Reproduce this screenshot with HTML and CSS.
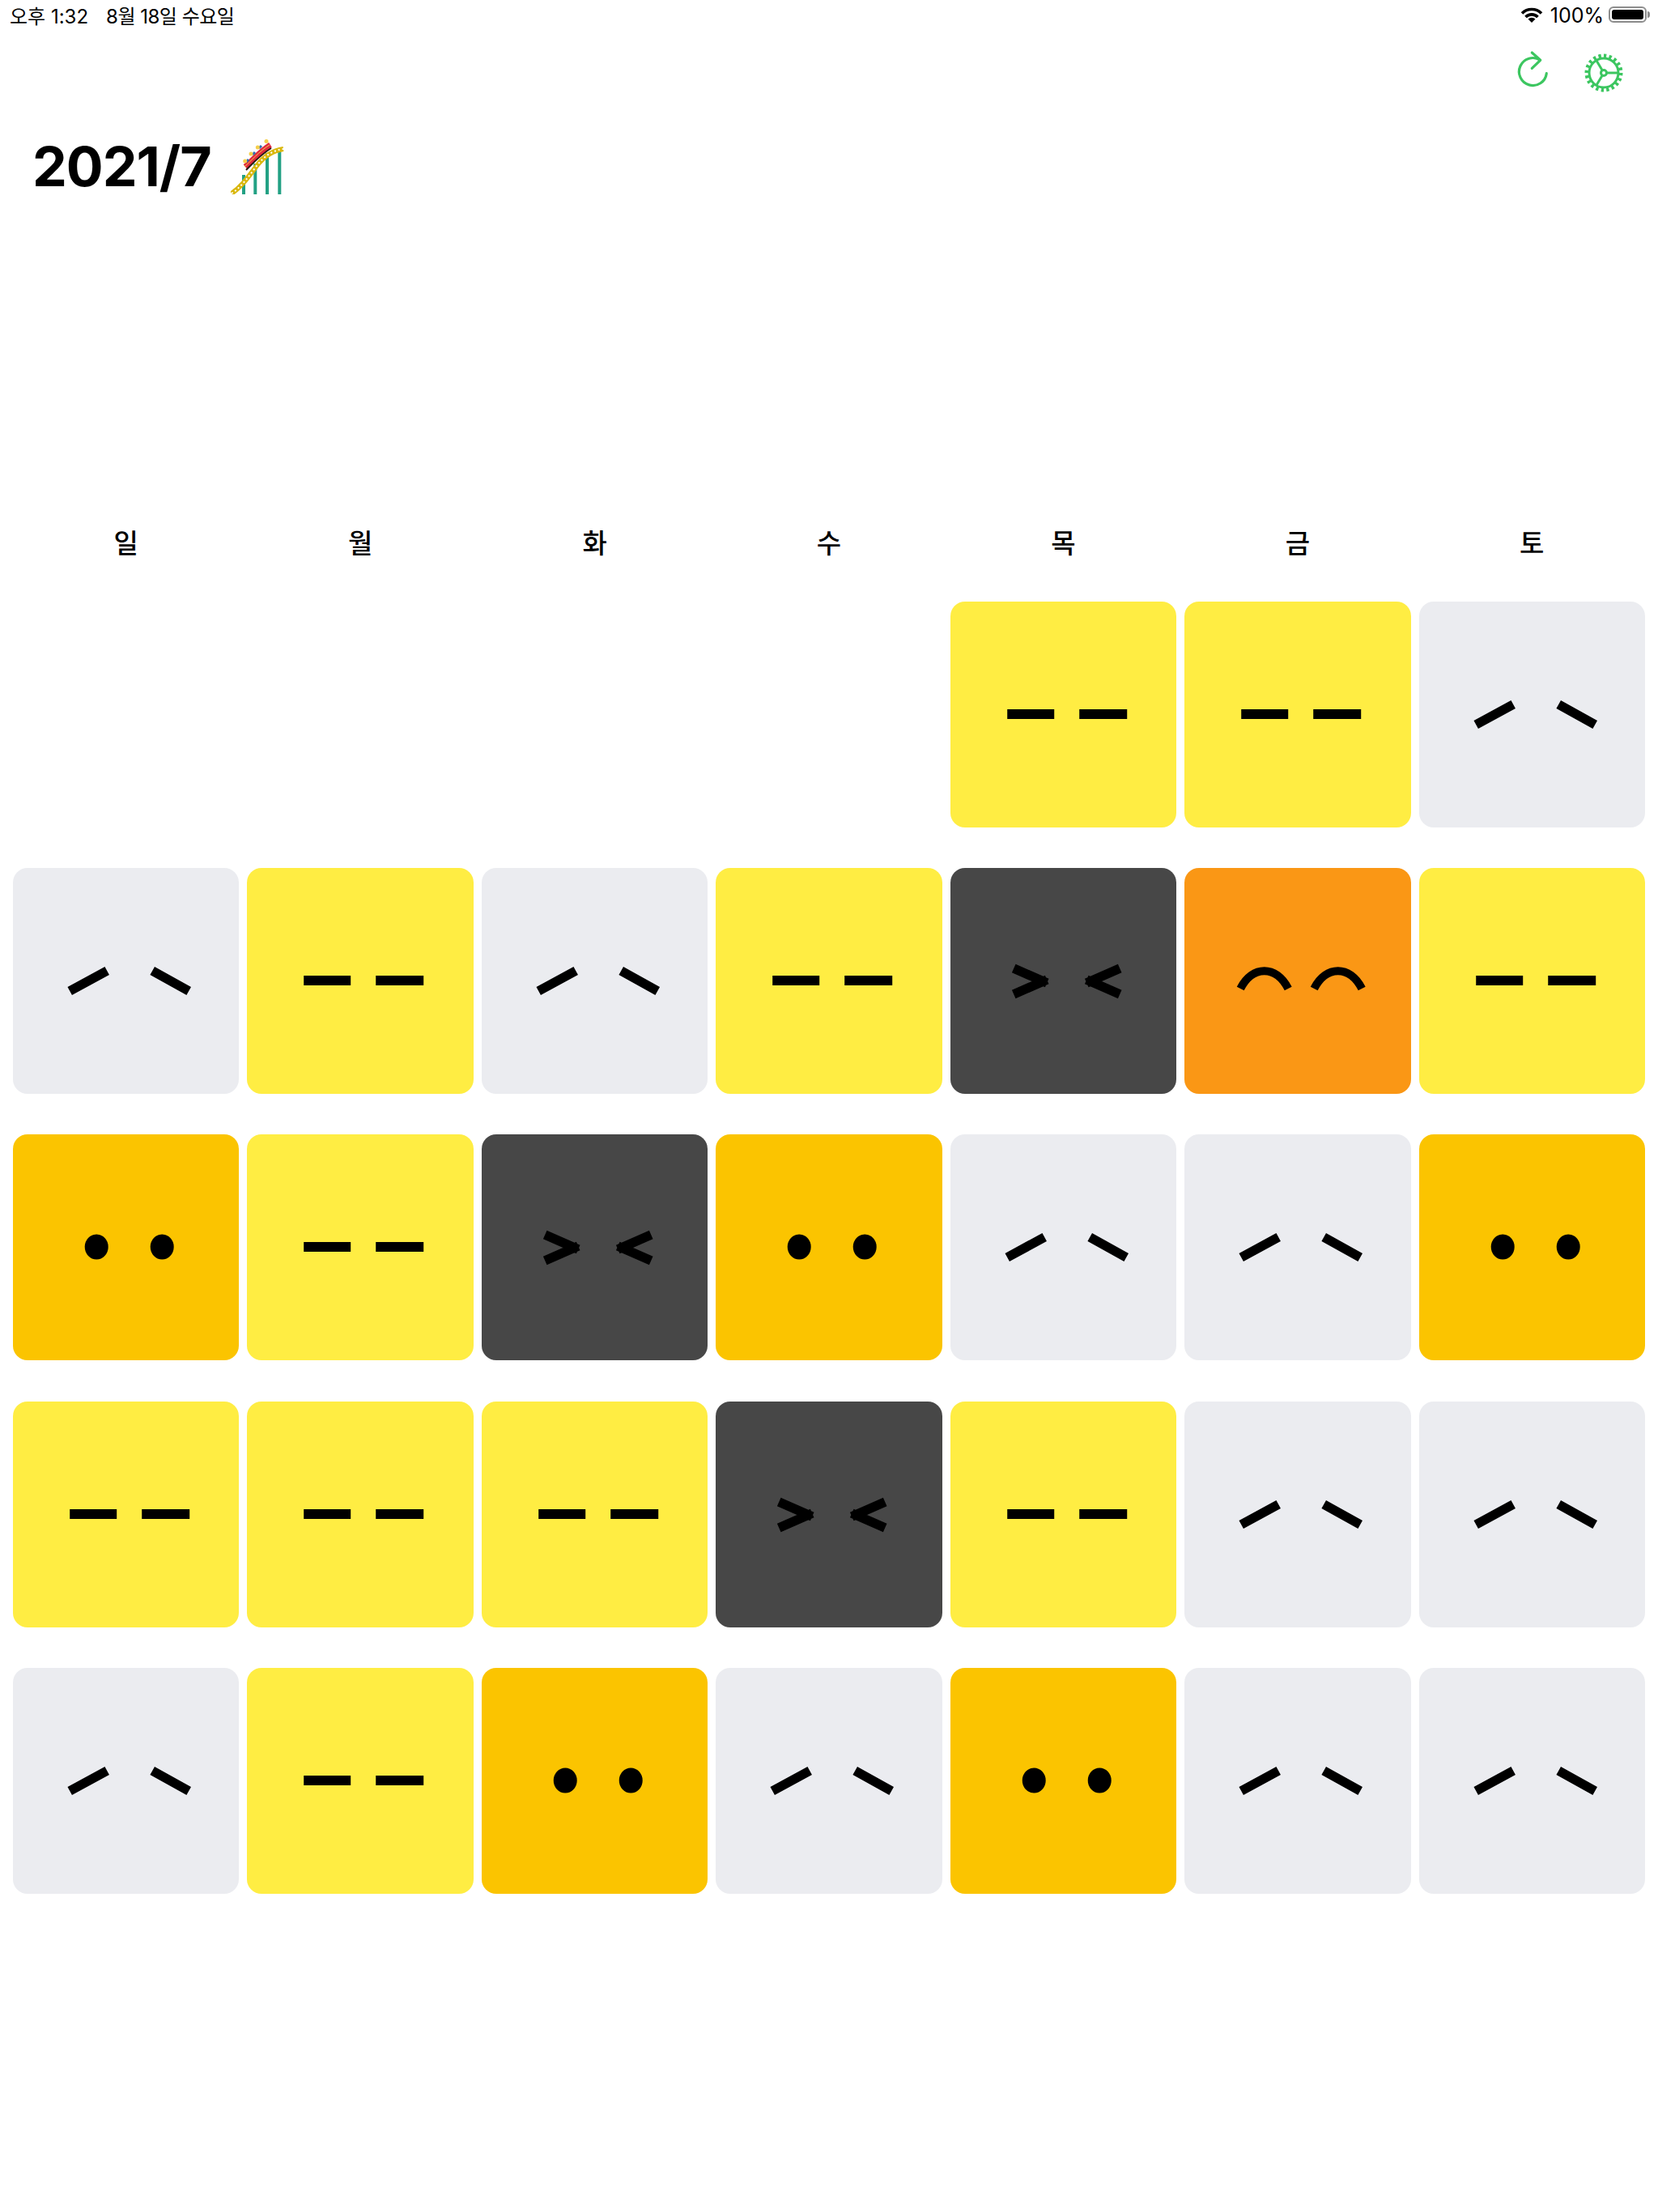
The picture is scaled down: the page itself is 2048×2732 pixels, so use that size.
FILE: index.html
```html
<!DOCTYPE html>
<html lang="ko">
<head>
    <meta charset="UTF-8">
    <meta name="viewport" content="width=device-width, initial-scale=1.0">
    <title>2021/7</title>
    <link rel="stylesheet" href="styles.css">
</head>
<body>

<svg class="defs" width="0" height="0">
    <symbol id="meh" viewBox="0 0 279 279"><path d="M70 139H128M159 139H218" stroke="#000" stroke-width="12"/></symbol>
    <symbol id="sad" viewBox="0 0 279 279"><path d="M70 152L116 127M172 127L217 152" stroke="#000" stroke-width="11.500"/></symbol>
    <symbol id="squint" viewBox="0 0 279 279"><path d="M78 124L119 142M78 156L119 138M209 124L168 142M209 156L168 138" fill="none" stroke="#000" stroke-width="11.500"/></symbol>
    <symbol id="happy" viewBox="0 0 279 279"><path d="M69 149C84 120 113 120 128 149M160 149C175 120 204 120 219 149" fill="none" stroke="#000" stroke-width="10"/></symbol>
    <symbol id="dots" viewBox="0 0 279 279"><ellipse cx="103" cy="139" rx="14.5" ry="15.5"/><ellipse cx="184" cy="139" rx="14.5" ry="15.5"/></symbol>
</svg>

<div class="status-bar">
    <div class="status-left">
        <span>오후 1:32</span>
        <span class="status-date">8월 18일 수요일</span>
    </div>
    <div class="status-right">
        <svg class="wifi" width="28" height="20" viewBox="0 0 28 20">
            <path d="M2 8.5A17 17 0 0 1 26 8.5M6.5 13A10.5 10.5 0 0 1 21.500 13" fill="none" stroke="#000" stroke-width="3.6"/>
            <path d="M14 20L9.500 15.500A6.500 6.500 0 0 1 18.500 15.500Z"/>
        </svg>
        <span class="status-battery-text">100%</span>
        <div class="battery"><div class="battery-level"></div></div>
        <div class="battery-cap"></div>
    </div>
</div>

<div class="toolbar">
    <svg class="tool-icon" viewBox="0 0 50 55">
        <path d="M42.300 30.700A17 17 0 1 1 34.700 14.300M24.300 5L34.700 14.300L24.300 24.300" fill="none" stroke-linecap="round" stroke-linejoin="round"/>
    </svg>
    <svg class="tool-icon gear" viewBox="0 0 50 55">
        <circle cx="25" cy="30" r="18"/>
        <circle class="teeth" cx="25" cy="30" r="21" pathLength="100"/>
        <circle cx="25" cy="30" r="3.500"/>
        <path d="M28.500 30H43M23.250 27L15.500 14M23.250 33L15.500 46"/>
    </svg>
</div>

<div class="title">
    <h1>2021/7</h1>
    <svg class="coaster" width="68" height="68" viewBox="0 0 68 68">
        <path d="M16 44V68M30.300 30V68M45 17V68M60.300 13V68" stroke="#23a184" stroke-width="4"/>
        <path d="M1 67C14 58 22 46 32 33C41 21 51 14 65 12" fill="none" stroke="#d9b70c" stroke-width="6"/>
        <path d="M1 67C14 58 22 46 32 33C41 21 51 14 65 12" fill="none" stroke="#fff" stroke-width="2" stroke-dasharray="2 3"/>
        <path d="M18 34C26 27 36 15 49 7" fill="none" stroke="#e02a3e" stroke-width="7"/>
        <path d="M19 38C27 30 38 18 50 11" fill="none" stroke="#2a1a12" stroke-width="2"/>
        <path d="M17 34C25 27 35 15 48 7" fill="none" stroke="#f5cf4b" stroke-width="1"/>
        <path d="M19 28L22 25M27 19L30 16M35 11L38 8" stroke="#2f6fb0" stroke-width="3"/>
        <g fill="#f5cf4b"><circle cx="17.700" cy="27" r="2.500"/><circle cx="25" cy="18" r="2.500"/><circle cx="33.300" cy="10" r="2.500"/><circle cx="44" cy="2.500" r="2.500"/></g>
    </svg>
</div>

<div class="weekdays">
    <div>일</div><div>월</div><div>화</div><div>수</div><div>목</div><div>금</div><div>토</div>
</div>

<div class="board">
    <div></div>
    <div></div>
    <div></div>
    <div></div>
    <div class="tile yellow"><svg><use href="#meh"/></svg></div>
    <div class="tile yellow"><svg><use href="#meh"/></svg></div>
    <div class="tile gray"><svg><use href="#sad"/></svg></div>

    <div class="tile gray"><svg><use href="#sad"/></svg></div>
    <div class="tile yellow"><svg><use href="#meh"/></svg></div>
    <div class="tile gray"><svg><use href="#sad"/></svg></div>
    <div class="tile yellow"><svg><use href="#meh"/></svg></div>
    <div class="tile dark"><svg><use href="#squint"/></svg></div>
    <div class="tile orange"><svg><use href="#happy"/></svg></div>
    <div class="tile yellow"><svg><use href="#meh"/></svg></div>

    <div class="tile amber"><svg><use href="#dots"/></svg></div>
    <div class="tile yellow"><svg><use href="#meh"/></svg></div>
    <div class="tile dark"><svg><use href="#squint"/></svg></div>
    <div class="tile amber"><svg><use href="#dots"/></svg></div>
    <div class="tile gray"><svg><use href="#sad"/></svg></div>
    <div class="tile gray"><svg><use href="#sad"/></svg></div>
    <div class="tile amber"><svg><use href="#dots"/></svg></div>

    <div class="tile yellow"><svg><use href="#meh"/></svg></div>
    <div class="tile yellow"><svg><use href="#meh"/></svg></div>
    <div class="tile yellow"><svg><use href="#meh"/></svg></div>
    <div class="tile dark"><svg><use href="#squint"/></svg></div>
    <div class="tile yellow"><svg><use href="#meh"/></svg></div>
    <div class="tile gray"><svg><use href="#sad"/></svg></div>
    <div class="tile gray"><svg><use href="#sad"/></svg></div>

    <div class="tile gray"><svg><use href="#sad"/></svg></div>
    <div class="tile yellow"><svg><use href="#meh"/></svg></div>
    <div class="tile amber"><svg><use href="#dots"/></svg></div>
    <div class="tile gray"><svg><use href="#sad"/></svg></div>
    <div class="tile amber"><svg><use href="#dots"/></svg></div>
    <div class="tile gray"><svg><use href="#sad"/></svg></div>
    <div class="tile gray"><svg><use href="#sad"/></svg></div>
</div>

</body>
</html>
```

FILE: styles.css
```css
body {
    margin: 0;
    height: 2732px;
    background-color: white;
    color: black;
    font-family: Inter, "Noto Sans CJK KR", sans-serif;
    overflow: hidden;
}

.defs {
    display: block;
    height: 0;
}

.status-bar {
    display: flex;
    justify-content: space-between;
    align-items: center;
    height: 36px;
    padding: 0 10px 4px 12px;
    font-size: 24px;
}

.status-left {
    display: flex;
    gap: 22px;
}

.status-date {
    letter-spacing: -0.5px;
}

.status-right {
    display: flex;
    align-items: center;
}

.status-battery-text {
    padding-top: 2px;
    font-size: 25px;
}

.wifi {
    margin-right: 9px;
}

.battery {
    width: 47px;
    height: 20px;
    margin-left: 6px;
    padding: 2px;
    box-sizing: border-box;
    border: 2px solid #8e8e8e;
    border-radius: 6px;
}

.battery-level {
    height: 100%;
    background-color: black;
    border-radius: 3px;
}

.battery-cap {
    width: 3px;
    height: 8px;
    margin-left: 1px;
    background-color: #8e8e8e;
    border-radius: 0 3px 3px 0;
}

.toolbar {
    display: flex;
    justify-content: flex-end;
    gap: 38px;
    padding: 20px 42px 0 0;
}

.tool-icon {
    width: 50px;
    height: 55px;
    fill: none;
    stroke: #3cc660;
    stroke-width: 3.2;
}

.gear {
    stroke-width: 3;
}

.teeth {
    stroke-width: 5;
    stroke-dasharray: 2.5 2.5;
}

.title {
    display: flex;
    align-items: flex-start;
    gap: 24px;
    margin-top: 50px;
    padding-left: 40px;
    height: 80px;
}

.title h1 {
    margin: 0;
    font-size: 68px;
    line-height: 80px;
    font-weight: 700;
    letter-spacing: -1px;
}

.coaster {
    margin-top: 7px;
}

.weekdays {
    display: grid;
    grid-template-columns: repeat(7, 1fr);
    column-gap: 10px;
    margin: 400px 16px 0;
    height: 50px;
    line-height: 48px;
    text-align: center;
    font-size: 33px;
    font-weight: 500;
    font-family: "Noto Sans CJK KR", sans-serif;
}

.board {
    display: grid;
    grid-template-columns: repeat(7, 1fr);
    grid-auto-rows: 279px;
    gap: 50.2px 10px;
    margin: 48px 16px 0;
}

.tile {
    border-radius: 18px;
}

.tile svg {
    display: block;
    width: 100%;
    height: 100%;
}

.yellow { background-color: #ffed43; }
.amber { background-color: #fbc400; }
.gray { background-color: #ebecf0; }
.dark { background-color: #474747; }
.orange { background-color: #fa9715; }
```
